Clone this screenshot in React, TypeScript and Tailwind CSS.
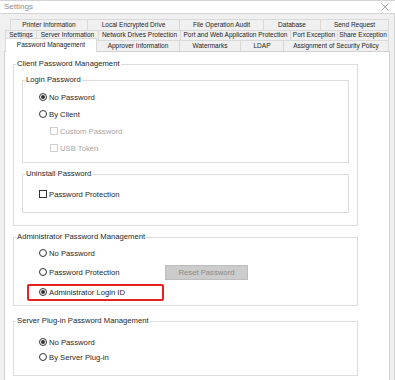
import React from 'react';

type Tab = { label: string; w: string; active?: boolean };

const row1: Tab[] = [
  { label: 'Printer Information', w: 'w-[78px]' },
  { label: 'Local Encrypted Drive', w: 'w-[92px]' },
  { label: 'File Operation Audit', w: 'w-[84px]' },
  { label: 'Database', w: 'w-[57px]' },
  { label: 'Send Request', w: 'w-[68px]' },
];

const row2: Tab[] = [
  { label: 'Settings', w: 'w-[32px]' },
  { label: 'Server Information', w: 'w-[62px]' },
  { label: 'Network Drives Protection', w: 'w-[82px]' },
  { label: 'Port and Web Application Protection', w: 'w-[110px]' },
  { label: 'Port Exception', w: 'w-[47px]' },
  { label: 'Share Exception', w: 'w-[51px]' },
];

const row3: Tab[] = [
  { label: 'Password Management', w: 'w-[92px]', active: true },
  { label: 'Approver Information', w: 'w-[83px]' },
  { label: 'Watermarks', w: 'w-[61px]' },
  { label: 'LDAP', w: 'w-[43px]' },
  { label: 'Assignment of Security Policy', w: 'w-[105px]' },
];

const TabRow = ({ tabs, className }: { tabs: Tab[]; className: string }) => (
  <div className={`flex ${className}`}>
    {tabs.map((t, i) => (
      <div
        key={t.label}
        className={`flex items-center justify-center whitespace-nowrap border-t border-r border-[#d9d9d9] text-[6.5px] leading-none text-[#222] ${t.w} ${
          i === 0 ? 'border-l' : ''
        } ${t.active ? 'relative z-10 -mt-[2px] h-[14px] bg-white' : 'bg-[#f0f0f0]'}`}
      >
        {t.label}
      </div>
    ))}
  </div>
);

const Radio = ({ checked, label }: { checked?: boolean; label: string }) => (
  <div className="flex items-center gap-[2px]">
    <span className="flex h-[8px] w-[8px] items-center justify-center rounded-full border border-[#333] bg-white">
      {checked && <span className="h-[4px] w-[4px] rounded-full bg-[#333]" />}
    </span>
    <span>{label}</span>
  </div>
);

const Check = ({ label, disabled }: { label: string; disabled?: boolean }) => (
  <div className={`flex items-center gap-[2px] ${disabled ? 'text-[#a6a6a6]' : ''}`}>
    <span className={`h-[8px] w-[8px] border bg-white ${disabled ? 'border-[#cfcfcf]' : 'border-[#333]'}`} />
    <span>{label}</span>
  </div>
);

const Group = ({
  title,
  className,
  children,
}: {
  title: string;
  className: string;
  children: React.ReactNode;
}) => (
  <fieldset className={`border border-[#dcdcdc] ${className}`}>
    <legend className="ml-[2px] px-[1px] leading-[10px]">{title}</legend>
    {children}
  </fieldset>
);

export default function App() {
  return (
    <div className="h-[380px] w-[395px] overflow-hidden bg-[#f0f0f0] font-['Liberation_Sans',Arial,sans-serif] text-[7.7px] text-[#1f1f1f]">
      {/* title bar */}
      <div className="flex h-[14px] items-center justify-between border-t border-b border-[#d4d4d4] bg-white pl-[4px] pr-[6px]">
        <span className="text-[8px] text-[#8c8c8c]">Settings</span>
        <svg width="8" height="8" viewBox="0 0 8 8">
          <path d="M0.5 0.5 L7.5 7.5 M7.5 0.5 L0.5 7.5" stroke="#9a9a9a" strokeWidth="0.8" />
        </svg>
      </div>

      <div className="flex h-[366px] border-r border-[#d4d4d4]">
        <div className="flex-1">
          {/* tabs */}
          <div className="mt-[5px]">
            <TabRow tabs={row1} className="ml-[10px] h-[11px]" />
            <TabRow tabs={row2} className="ml-[5px] h-[10px]" />
            <TabRow tabs={row3} className="ml-[5px] h-[11px]" />
          </div>

          {/* panel */}
          <div className="ml-[4px] h-[340px] w-[386px] border border-[#d0d0d0] bg-white">
            <Group title="Client Password Management" className="ml-[8px] mt-[7px] w-[345px] pb-[12px]">
              <Group title="Login Password" className="ml-[8px] mt-[6px] w-[327px] pt-[4px] pb-[5px]">
                <div className="pl-[16px]">
                  <div className="flex h-[17px] items-center">
                    <Radio checked label="No Password" />
                  </div>
                  <div className="flex h-[17px] items-center">
                    <Radio label="By Client" />
                  </div>
                  <div className="flex h-[17px] items-center pl-[11px]">
                    <Check disabled label="Custom Password" />
                  </div>
                  <div className="flex h-[17px] items-center pl-[11px]">
                    <Check disabled label="USB Token" />
                  </div>
                </div>
              </Group>
              <Group title="Uninstall Password" className="ml-[8px] mt-[6px] w-[327px] pt-[7px] pb-[9px]">
                <div className="flex h-[17px] items-center pl-[16px]">
                  <Check label="Password Protection" />
                </div>
              </Group>
            </Group>

            <Group title="Administrator Password Management" className="ml-[8px] mt-[6px] w-[345px] pt-[2px] pb-[4px]">
              <div className="flex h-[19px] items-center pl-[25px]">
                <Radio label="No Password" />
              </div>
              <div className="flex h-[19px] items-center pl-[25px]">
                <div className="w-[126px]">
                  <Radio label="Password Protection" />
                </div>
                <div className="flex h-[15px] w-[83px] items-center justify-center border border-[#bdbdbd] bg-[#cccccc] text-[#8a8a8a]">
                  Reset Password
                </div>
              </div>
              <div className="ml-[13px] mt-[2px] flex h-[17px] w-[137px] items-center rounded-[2px] border-2 border-[#e5231f] pl-[10px]">
                <Radio checked label="Administrator Login ID" />
              </div>
            </Group>

            <Group title="Server Plug-in Password Management" className="ml-[8px] mt-[10px] w-[345px] pt-[9px] pb-[10px]">
              <div className="flex h-[15px] items-center pl-[25px]">
                <Radio checked label="No Password" />
              </div>
              <div className="flex h-[15px] items-center pl-[25px]">
                <Radio label="By Server Plug-in" />
              </div>
            </Group>
          </div>
        </div>
      </div>
    </div>
  );
}
